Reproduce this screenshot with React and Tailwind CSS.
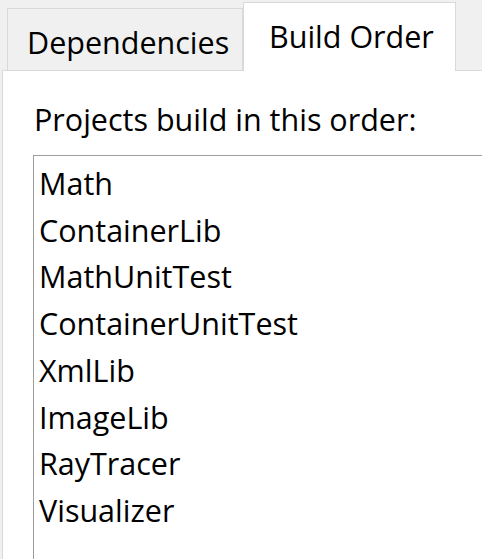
// App.jsx — "Build Order" tab of a project dependencies dialog.

const projects = [
  'Math',
  'ContainerLib',
  'MathUnitTest',
  'ContainerUnitTest',
  'XmlLib',
  'ImageLib',
  'RayTracer',
  'Visualizer',
]

export default function App() {
  return (
    <div
      className="w-[482px] h-[559px] bg-[#f0f0f0] flex flex-col overflow-hidden text-black"
      style={{ fontFamily: '"Open Sans", "Noto Sans", sans-serif' }}
    >
      {/* Tab strip */}
      <div className="h-[70px] shrink-0 flex items-end pl-[7px]">
        <div className="w-[236px] h-[62px] border border-b-0 border-[#d9d9d9] bg-[#f0f0f0] pl-[19px] pt-[9px] text-[30.5px] leading-[48px]">
          Dependencies
        </div>
        <div className="relative z-10 -mb-px w-[213px] h-[69px] border border-b-0 border-[#d9d9d9] bg-white pl-[25px] pt-[9px] text-[30.5px] leading-[48px]">
          Build Order
        </div>
      </div>

      {/* Tab page */}
      <div className="flex-1 ml-[2px] border-l border-t border-[#d9d9d9] bg-white pl-[30px] pt-[25px]">
        <p className="text-[30.5px] leading-[47px] pl-[1px]">Projects build in this order:</p>
        <div className="mt-[12px] h-[500px] border-l border-t border-[#9c9ca2] pl-[5px] pt-[4px]">
          {projects.map((name) => (
            <div key={name} className="text-[30.5px] leading-[46.7px]">
              {name}
            </div>
          ))}
        </div>
      </div>
    </div>
  )
}
